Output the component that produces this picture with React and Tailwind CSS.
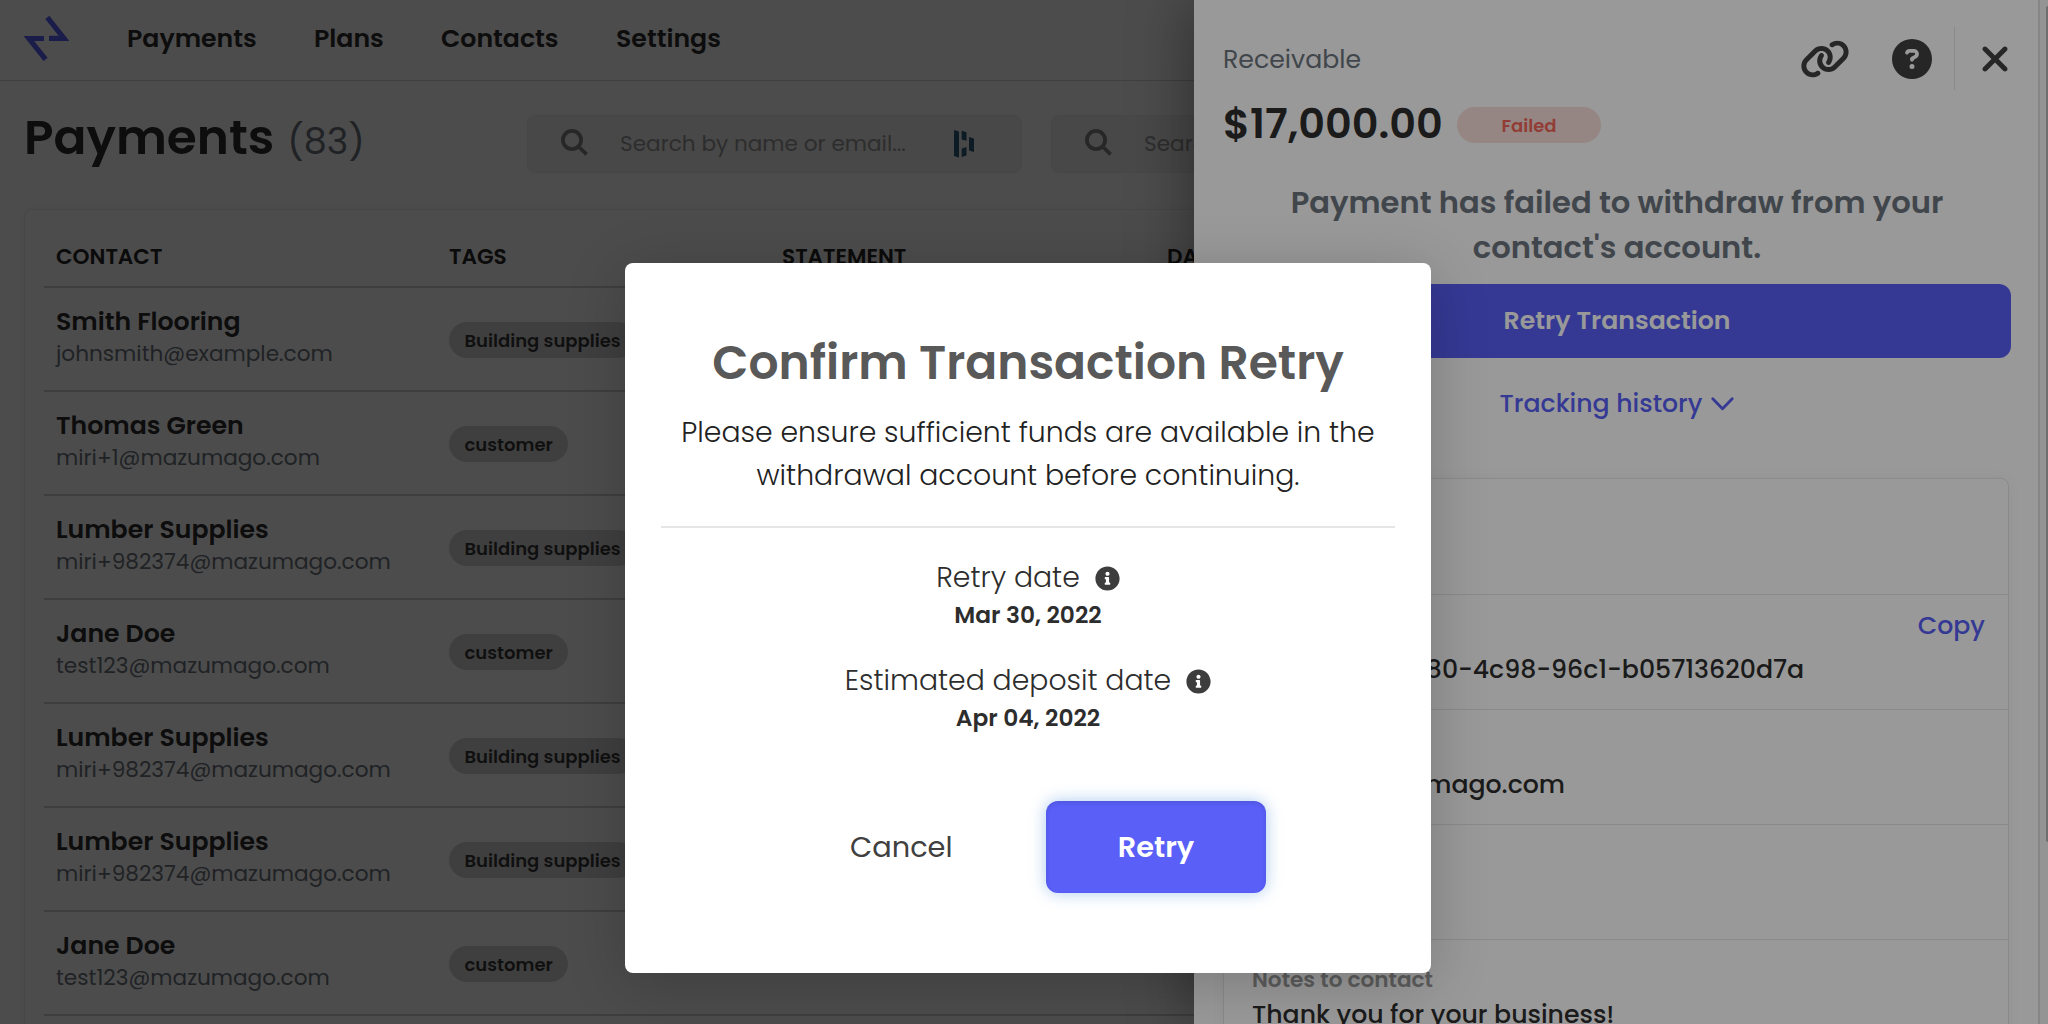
import React, { useState } from 'react';
import { FaLink, FaCircleQuestion, FaXmark } from 'react-icons/fa6';
import { FaInfoCircle } from 'react-icons/fa';

const payments = [
  { name: 'Smith Flooring', email: 'johnsmith@example.com', tag: 'Building supplies' },
  { name: 'Thomas Green', email: 'miri+1@mazumago.com', tag: 'customer' },
  { name: 'Lumber Supplies', email: 'miri+982374@mazumago.com', tag: 'Building supplies' },
  { name: 'Jane Doe', email: 'test123@mazumago.com', tag: 'customer' },
  { name: 'Lumber Supplies', email: 'miri+982374@mazumago.com', tag: 'Building supplies' },
  { name: 'Lumber Supplies', email: 'miri+982374@mazumago.com', tag: 'Building supplies' },
  { name: 'Jane Doe', email: 'test123@mazumago.com', tag: 'customer' },
];

function Logo() {
  return (
    <svg width="45" height="45" viewBox="0 0 45 45" fill="none" stroke="#595ff7" strokeWidth="5.2">
      <path d="M23.3 1.4L40 22.3H25" />
      <path d="M21.6 43.4L4.9 22.5H20" />
    </svg>
  );
}

function SearchIcon() {
  return (
    <svg width="27" height="27" viewBox="0 0 27 27" fill="none" stroke="#858585" strokeWidth="3.8">
      <circle cx="11" cy="11" r="9.1" />
      <path d="M17.5 17.5L25.6 25.4" />
    </svg>
  );
}

function PasswordManagerIcon() {
  return (
    <svg width="20" height="28" viewBox="0 0 20 28" fill="#285a78">
      <path d="M0 0L5 1.6V27.6L0 26Z" />
      <path d="M7.7 .8L12.5 2.2V10.8L7.7 9.4Z" />
      <path d="M7.7 18.4L12.5 17V25.6L7.7 27Z" />
      <path d="M15 7L20 8.5V22L15 20.6Z" />
    </svg>
  );
}

function SearchBox({ placeholder, children }) {
  return (
    <div className="flex h-[58px] w-[495px] shrink-0 items-center rounded-lg border border-[#ececec] bg-[#f2f2f2] pl-[33px] pr-[47px]">
      <div className="mb-1">
        <SearchIcon />
      </div>
      <span className="ml-[32px] flex-1 whitespace-nowrap text-[21.6px] text-[#999999]">{placeholder}</span>
      {children}
    </div>
  );
}

function Navbar() {
  return (
    <header className="flex h-[81px] items-center border-b border-[#d4d4d4] pb-[3px] pl-6 text-[25.2px] font-semibold">
      <Logo />
      <nav className="ml-[58px] flex">
        <a className="w-[187px]">Payments</a>
        <a className="w-[127px]">Plans</a>
        <a className="w-[175px]">Contacts</a>
        <a>Settings</a>
      </nav>
    </header>
  );
}

function PaymentsTable() {
  return (
    <div className="mt-9 w-[1980px] rounded-lg border border-[#ececec] px-[19px] pb-8 shadow-[0_0_14px_rgba(0,0,0,0.03)]">
      <div className="flex h-[78px] border-b-2 border-[#d0d0d0] pl-3 pt-[35px] text-[21.6px] font-semibold leading-[24px] text-[#262626]">
        <div className="w-[393px]">CONTACT</div>
        <div className="w-[333px]">TAGS</div>
        <div className="w-[385px]">STATEMENT</div>
        <div>DATE</div>
      </div>
      {payments.map((payment, index) => (
        <div key={index} className="flex h-[104px] border-b-2 border-[#d0d0d0] pl-3">
          <div className="w-[393px] pt-[19px]">
            <h3 className="text-[25.2px] font-semibold leading-[30px]">{payment.name}</h3>
            <p className="mt-px text-[21.6px] leading-[31px] text-[#6c757d]">{payment.email}</p>
          </div>
          <div className="pt-[34px]">
            <span className="flex h-9 items-center rounded-full bg-[#d5d5d5] px-[15.5px] text-[18px] font-semibold text-[#383838]">{payment.tag}</span>
          </div>
        </div>
      ))}
    </div>
  );
}

function DetailRow({ label, value, action }) {
  return (
    <div className="flex h-[115px] justify-between border-b border-[#e6e6e6] pl-7 pr-[23px]">
      <div className="pt-7">
        <p className="h-6 text-[21.6px] font-semibold leading-[24px] text-[#999999]">{label}</p>
        <p className="mt-2 text-[25.2px] font-medium leading-[30px]">{value}</p>
      </div>
      {action && <button className="self-start pt-4 text-[25.2px] font-medium leading-[30px] text-[#595ff7]">{action}</button>}
    </div>
  );
}

function ReceivableDrawer() {
  return (
    <aside className="absolute inset-y-0 right-0 flex w-[854px] bg-white shadow-[-4px_0_56px_rgba(0,0,0,0.38)]">
      <div className="h-full flex-1 overflow-hidden pl-[29px] pt-[27px]">
        <div className="flex h-[63px] w-[788px] items-center">
          <span className="mt-[2px] flex-1 text-[25.2px] text-[#6c757d]">Receivable</span>
          <FaLink className="h-[40px] w-[50px] text-[#404040]" />
          <FaCircleQuestion className="ml-[42px] size-[40px] text-[#404040]" />
          <div className="ml-[22px] h-full w-px bg-[#e6e6e6]" />
          <FaXmark className="ml-[20px] mr-[-4px] h-[40px] w-[40px] text-[#404040]" />
        </div>

        <div className="mt-[9px] flex h-[50px] items-center">
          <span className="w-[234px] text-[41.4px] font-semibold">$17,000.00</span>
          <span className="mt-[2px] flex h-9 w-[144px] items-center justify-center rounded-full bg-[#fadfda] text-[18px] font-semibold text-[#f2665a]">
            Failed
          </span>
        </div>

        <div className="w-[788px]">
          <h2 className="mt-[31px] text-center text-[30.6px] font-semibold leading-[45px] text-[#6c757d]">
            Payment has failed to withdraw from your
            <br />
            contact's account.
          </h2>
          <button className="mt-[14px] h-[74px] w-full rounded-xl bg-[#595ff7] text-[25.2px] font-semibold text-white">Retry Transaction</button>
          <button className="mt-[31px] flex h-[30px] w-full items-center justify-center gap-[9px] text-[25.2px] font-medium text-[#595ff7]">
            Tracking history
            <svg width="23" height="14" viewBox="0 0 23 14" fill="none" stroke="currentColor" strokeWidth="2.8" strokeLinecap="round" strokeLinejoin="round">
              <path d="M1.8 1.8L11.5 11.8L21.2 1.8" />
            </svg>
          </button>
        </div>

        <div className="mt-[59px] w-[786px] rounded-lg border border-[#e6e6e6] shadow-[0_0_14px_rgba(0,0,0,0.04)]">
          <div className="h-[116px] border-b border-[#e6e6e6]" />
          <DetailRow label="Transaction ID" value="36e24d7b-4b80-4c98-96c1-b05713620d7a" action="Copy" />
          <DetailRow label="Email" value="miri+1@mazumago.com" />
          <DetailRow />
          <DetailRow label="Notes to contact" value="Thank you for your business!" />
        </div>
      </div>
      <div className="w-[10px] border-l-2 border-[#e0e0e0] bg-[#f7f7f7] pl-[6px] pt-[6px]">
        <div className="h-[836px] rounded-l-full bg-[#b8b8b8]" />
      </div>
    </aside>
  );
}

function RetryDate({ label, date }) {
  return (
    <div>
      <div className="flex h-10 items-center justify-center gap-[15px] text-[28.3px] font-light">
        {label}
        <FaInfoCircle className="mt-[3px] size-[25px] text-[#3d3d3d]" />
      </div>
      <p className="mt-[3px] text-[23.3px] font-semibold leading-[30px]">{date}</p>
    </div>
  );
}

function ConfirmModal({ onClose }) {
  return (
    <div className="absolute inset-0 bg-black/40 pl-[625px] pt-[263px]">
      <div className="h-[710px] w-[806px] rounded-lg bg-white px-9 pt-[70px] text-center shadow-[0_10px_60px_rgba(0,0,0,0.2)]">
        <h1 className="text-[47.2px] font-semibold leading-[60px] text-[#595959]">Confirm Transaction Retry</h1>
        <p className="mt-[18px] text-[28.35px] font-light leading-[43px] text-[#222222]">
          Please ensure sufficient funds are available in the
          <br />
          withdrawal account before continuing.
        </p>
        <hr className="mb-[29px] mt-[29px] border-t-2 border-[#e6e6e6]" />
        <div className="space-y-[30px]">
          <RetryDate label="Retry date" date="Mar 30, 2022" />
          <RetryDate label="Estimated deposit date" date="Apr 04, 2022" />
        </div>
        <div className="mt-[68px] flex items-center pl-[189px] text-[28.8px]">
          <button onClick={onClose} className="w-[196px] pt-[2px] text-left text-[#404040]">Cancel</button>
          <button
            onClick={onClose}
            className="h-[92px] w-[220px] rounded-xl bg-[#595ff7] pt-[2px] font-semibold text-white shadow-[0_0_16px_rgba(70,140,220,0.45),inset_0_2px_4px_rgba(0,0,0,0.1)]"
          >
            Retry
          </button>
        </div>
      </div>
    </div>
  );
}

export default function App() {
  const [isModalOpen, setIsModalOpen] = useState(true);

  return (
    <div className="relative h-screen w-full overflow-hidden bg-white font-['Poppins','Inter',sans-serif] text-[#2d2d2d]">
      <Navbar />

      {/* Main Content */}
      <main className="pl-6 pt-[34px]">
        <div className="flex gap-[29px]">
          <h1 className="flex h-[58px] w-[474px] shrink-0 items-baseline text-[48.6px] font-semibold leading-[44px]">
            Payments
            <span className="ml-[13px] text-[36.5px] font-normal text-[#6c757d]">(83)</span>
          </h1>
          <SearchBox placeholder="Search by name or email...">
            <PasswordManagerIcon />
          </SearchBox>
          <SearchBox placeholder="Search by amount..." />
        </div>
        <PaymentsTable />
      </main>

      <div className="absolute inset-0 bg-black/50" />
      <ReceivableDrawer />
      {isModalOpen && <ConfirmModal onClose={() => setIsModalOpen(false)} />}
    </div>
  );
}
